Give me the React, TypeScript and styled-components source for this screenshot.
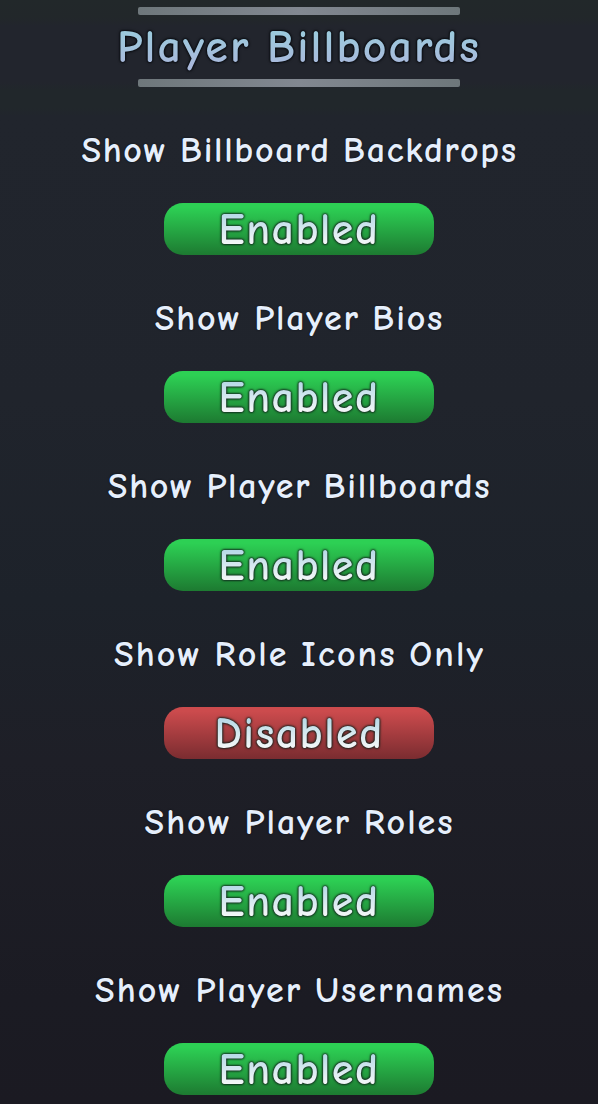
import styled, { createGlobalStyle } from "styled-components";

interface Setting {
  /** Text shown above the toggle */
  label: string;

  /** Whether the setting is turned on */
  enabled: boolean;

  /** Tracking of the label text, in pixels */
  tracking: number;
}

const settings: Setting[] = [
  { label: "Show Billboard Backdrops", enabled: true, tracking: 1.65 },
  { label: "Show Player Bios", enabled: true, tracking: 1.8 },
  { label: "Show Player Billboards", enabled: true, tracking: 1.65 },
  { label: "Show Role Icons Only", enabled: false, tracking: 2.03 },
  { label: "Show Player Roles", enabled: true, tracking: 1.93 },
  { label: "Show Player Usernames", enabled: true, tracking: 2 },
];

const SettingRow = ({ label, enabled, tracking }: Setting) => {
  return (
    <Row>
      <Label $tracking={tracking}>{label}</Label>
      <Toggle type="button" aria-pressed={enabled} $enabled={enabled}>
        <ToggleText>{enabled ? "Enabled" : "Disabled"}</ToggleText>
      </Toggle>
    </Row>
  );
};

const App = () => {
  return (
    <Panel>
      <GlobalStyle />
      <Header>
        <Divider />
        <Title>Player Billboards</Title>
        <Divider />
      </Header>
      {settings.map((setting) => (
        <SettingRow key={setting.label} {...setting} />
      ))}
    </Panel>
  );
};

export default App;

const GlobalStyle = createGlobalStyle`
  * {
    box-sizing: border-box;
  }

  body {
    margin: 0;
    background-color: #1b1a22;
    font-family: "Comic Neue Angular", "Comic Neue", Lato, "Open Sans", sans-serif;
  }
`;

const Panel = styled.main`
  width: 598px;
  height: 1104px;
  overflow: hidden;
  display: flex;
  flex-direction: column;
  align-items: center;
  background: linear-gradient(
    180deg,
    #22282a 0px,
    #22272a 18px,
    #22252d 26px,
    #22252d 82px,
    #21272b 90px,
    #21272b 108px,
    #21252d 116px,
    #20242c 400px,
    #1d222a 600px,
    #1e1f27 760px,
    #1b1b23 1000px,
    #1b1a22 1104px
  );
`;

const Header = styled.header`
  width: 100%;
  height: 87px;
  padding-top: 7px;
  display: flex;
  flex-direction: column;
  align-items: center;
`;

const Divider = styled.div`
  width: 322px;
  height: 8px;
  flex-shrink: 0;
  border-radius: 2px;
  background: linear-gradient(90deg, #6e777b, #828891 50%, #6e777b);
`;

const Title = styled.h1`
  height: 64px;
  margin: 0;
  font-size: 46px;
  font-weight: 700;
  line-height: 65px;
  letter-spacing: 2.08px;
  word-spacing: -2px;
  white-space: nowrap;
  color: transparent;
  background: linear-gradient(180deg, #9bcbdd 16px, #a9b9dc 50px);
  background-clip: text;
  filter: drop-shadow(0 0 1px #05080c) drop-shadow(0 0 1px #05080c);
`;

const Row = styled.section`
  width: 100%;
  height: 168px;
  flex-shrink: 0;
  padding-top: 36px;
  display: flex;
  flex-direction: column;
  align-items: center;
`;

const Label = styled.div<{ $tracking: number }>`
  height: 80px;
  line-height: 55px;
  font-size: 36px;
  font-weight: 700;
  letter-spacing: ${(props) => props.$tracking}px;
  word-spacing: -2px;
  margin-right: -1px;
  white-space: nowrap;
  color: #e6effc;
  text-shadow: 0 0 2px #0b0e14;
`;

const Toggle = styled.button<{ $enabled: boolean }>`
  width: 270px;
  height: 52px;
  flex-shrink: 0;
  padding: 0;
  border: none;
  border-radius: 19px;
  font-family: inherit;
  cursor: pointer;
  background: ${(props) =>
    props.$enabled
      ? "linear-gradient(180deg, #2dd054 8%, #1d7a31 100%)"
      : "linear-gradient(180deg, #cc4b4d 8%, #7a2c30 100%)"};
`;

const ToggleText = styled.span`
  display: block;
  font-size: 44px;
  font-weight: 700;
  line-height: 52px;
  padding-top: 1px;
  letter-spacing: 1.5px;
  color: transparent;
  background: linear-gradient(180deg, #b4d8e6 10px, #f6f8f8 42px);
  background-clip: text;
  filter: drop-shadow(0 0 1px #10201a) drop-shadow(0 0 1px #10201a);
`;
